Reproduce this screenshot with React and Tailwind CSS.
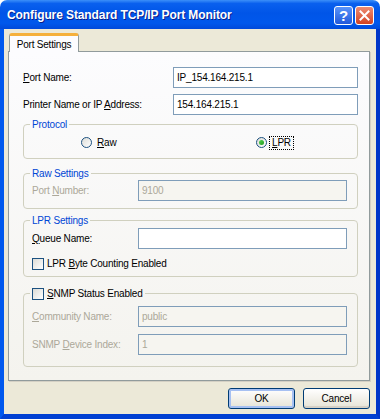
import React from "react";

function U({ children }) {
  return <span className="underline underline-offset-[1px]">{children}</span>;
}

function Field({ value, disabled, w }) {
  return (
    <div
      className={
        "h-[21px] border border-[#7F9DB9] flex items-center px-[3px] shrink-0 " +
        (disabled ? "bg-[#F6F5F0] text-[#ACA899]" : "bg-white text-black")
      }
      style={{ width: w }}
    >
      {value}
    </div>
  );
}

function Radio({ checked }) {
  return (
    <span className="w-[11px] h-[11px] rounded-full border border-[#1C5180] bg-linear-to-br from-[#DCDCD7] to-white flex items-center justify-center shrink-0">
      {checked && <span className="w-[5px] h-[5px] rounded-full bg-linear-to-br from-[#55D551] to-[#1E9A1B]" />}
    </span>
  );
}

function Check() {
  return (
    <span className="w-[12px] h-[12px] border border-[#1C5180] bg-linear-to-br from-[#DCDCD7] to-white shrink-0" />
  );
}

function Box({ legend, className, children }) {
  return (
    <fieldset className={"border border-[#D0D0BF] rounded-[4px] w-full shrink-0 " + className}>
      <legend className="ml-[6px] px-[2px] leading-[13px]">{legend}</legend>
      {children}
    </fieldset>
  );
}

function Button({ children, def }) {
  return (
    <div
      className={
        "w-[67px] h-[21px] border border-[#003C74] rounded-[3px] bg-linear-to-b from-white to-[#E6E3D6] flex items-center justify-center " +
        (def ? "shadow-[inset_0_0_0_2px_#A6C0F2]" : "shadow-[inset_0_-2px_0_#D6D0C5]")
      }
    >
      {children}
    </div>
  );
}

export default function App() {
  return (
    <div className="w-[380px] h-[419px] bg-white font-['Liberation_Sans',Arial,sans-serif] text-[10px] tracking-[-0.2px] text-black">
      <div className="w-full h-full flex flex-col rounded-t-[7px] overflow-hidden">
        <div className="h-[29px] shrink-0 flex items-center pl-[7px] pr-[6px] bg-[linear-gradient(to_bottom,#3C8FF9_0%,#0A60EE_12%,#0055E8_45%,#0058EC_80%,#0049DA_100%)]">
          <div className="flex-1 text-white font-bold text-[12px] tracking-[-0.1px] [text-shadow:1px_1px_0_#0A1E8A]">
            Configure Standard TCP/IP Port Monitor
          </div>
          <div className="flex gap-[2px] mt-[1px]">
            <div className="w-[19px] h-[19px] rounded-[3px] border border-white bg-linear-to-b from-[#5A94FA] to-[#2258DA] flex items-center justify-center text-white font-bold text-[15px] tracking-normal leading-none">
              ?
            </div>
            <div className="w-[19px] h-[19px] rounded-[3px] border border-white bg-linear-to-b from-[#ED8B72] to-[#D2401F] flex items-center justify-center">
              <svg width="11" height="11" viewBox="0 0 11 11">
                <path d="M1.5 1.5 L9.5 9.5 M9.5 1.5 L1.5 9.5" stroke="white" strokeWidth="2" strokeLinecap="square" />
              </svg>
            </div>
          </div>
        </div>
        <div className="flex-1 flex flex-col bg-[#ECE9D8] border-l-4 border-r-4 border-b-[5px] border-l-[#0058EE] border-r-[#0036C8] border-b-[#0040D2] pl-[4px] pr-[6px] pt-[4px]">
          <div className="h-[18px] flex shrink-0">
            <div className="relative z-10 ml-[1px] w-[70px] h-[19px] bg-[#FCFCFE] border-x border-[#919B9C] border-t-[3px] border-t-[#F5B03C] rounded-t-[3px] flex items-center justify-center">
              Port Settings
            </div>
          </div>
          <div className="h-[330px] shrink-0 border border-[#919B9C] bg-linear-to-b from-[#FCFCFE] to-[#F4F3EE] shadow-[1px_1px_0_#D4D0C4] flex flex-col pl-[14px] pr-[11px]">
            <div className="mt-[15px] flex items-center h-[21px] shrink-0">
              <div className="w-[150px]">
                <U>P</U>ort Name:
              </div>
              <Field value="IP_154.164.215.1" w={185} />
            </div>
            <div className="mt-[6px] flex items-center h-[21px] shrink-0">
              <div className="w-[150px]">
                Printer Name or IP <U>A</U>ddress:
              </div>
              <Field value="154.164.215.1" w={185} />
            </div>

            <Box legend={<span className="text-[#0046D5]">Protocol</span>} className="mt-[3px] h-[41px]">
              <div className="mt-[5px] flex items-center h-[13px]">
                <div className="w-[232px] pl-[57px] flex items-center gap-[5px]">
                  <Radio />
                  <span>
                    <U>R</U>aw
                  </span>
                </div>
                <div className="flex items-center gap-[2px]">
                  <Radio checked />
                  <span className="border border-dotted border-black px-[2px] leading-[12px]">
                    <U>L</U>PR
                  </span>
                </div>
              </div>
            </Box>

            <Box legend={<span className="text-[#0046D5]">Raw Settings</span>} className="mt-[8px] h-[42px]">
              <div className="flex items-center pl-[8px]">
                <div className="w-[106px] text-[#ACA899]">
                  Port <U>N</U>umber:
                </div>
                <Field value="9100" w={209} disabled />
              </div>
            </Box>

            <Box legend={<span className="text-[#0046D5]">LPR Settings</span>} className="mt-[5px] h-[63px]">
              <div className="mt-[1px] flex items-center pl-[8px]">
                <div className="w-[106px]">
                  <U>Q</U>ueue Name:
                </div>
                <Field value="" w={209} />
              </div>
              <div className="mt-[8px] flex items-center gap-[3px] pl-[8px] h-[13px]">
                <Check />
                <span>
                  LPR <U>B</U>yte Counting Enabled
                </span>
              </div>
            </Box>

            <Box
              legend={
                <span className="flex items-center gap-[3px] h-[13px]">
                  <Check />
                  <span>
                    <U>S</U>NMP Status Enabled
                  </span>
                </span>
              }
              className="mt-[10px] h-[80px]"
            >
              <div className="mt-[6px] flex items-center pl-[8px]">
                <div className="w-[106px] text-[#ACA899]">
                  <U>C</U>ommunity Name:
                </div>
                <Field value="public" w={209} disabled />
              </div>
              <div className="mt-[7px] flex items-center pl-[8px]">
                <div className="w-[106px] text-[#ACA899]">
                  SNMP <U>D</U>evice Index:
                </div>
                <Field value="1" w={209} disabled />
              </div>
            </Box>
          </div>
          <div className="mt-[7px] flex justify-end gap-[8px] shrink-0">
            <Button def>OK</Button>
            <Button>Cancel</Button>
          </div>
        </div>
      </div>
    </div>
  );
}
